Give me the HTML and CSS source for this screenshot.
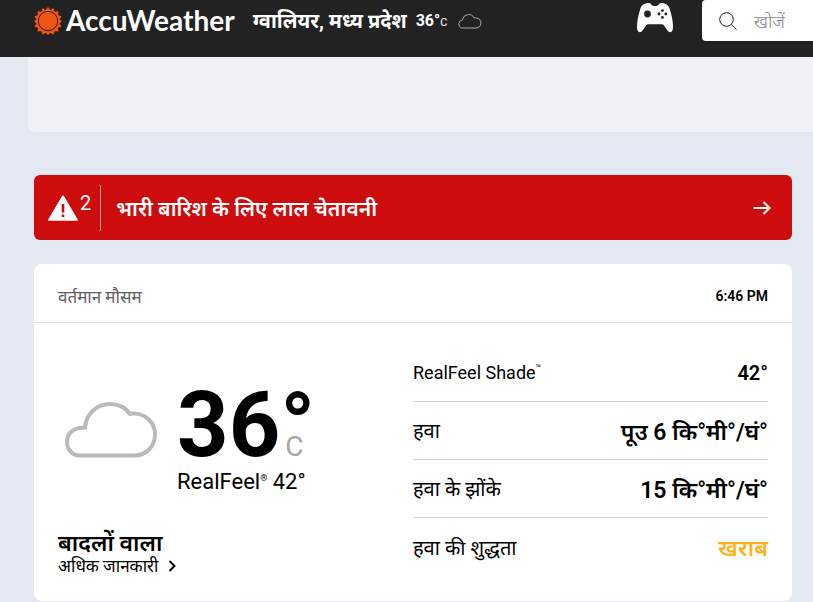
FILE: index.html
```html
<!DOCTYPE html>
<html lang="hi">
<head>
  <meta charset="UTF-8" />
  <title>ग्वालियर, मध्य प्रदेश | AccuWeather</title>
  <meta name="viewport" content="width=device-width, initial-scale=1.0" />
  <link rel="stylesheet" href="styles.css">
</head>
<body>

<header class="header">
  <a class="logo" href="#">
    <svg class="sun" viewBox="0 0 28 28" aria-hidden="true">
      <path fill="#f05514" d="M14 0l2.400 3.100L19.600 1l1 3.700 3.900-.5-.5 3.900 3.500 1.200-2 3.200L28 14l-2.500 2.400 2 3.300-3.600 1.100.6 3.800-3.800-.4-1.100 3.600-3.200-2L14 28l-2.400-2.300-3.200 2-1.100-3.600-3.800.4.6-3.800L.5 19.700l2-3.300L0 14l2.500-1.500-2-3.200L4 8.100l-.5-3.900 3.900.5 1-3.700 3.200 2.100z"/>
      <circle cx="14" cy="14" r="9.700" fill="none" stroke="#2a1a14" stroke-width="1"/>
    </svg>
    <span>AccuWeather</span>
  </a>
  <a class="location" href="#">
    <span class="place">ग्वालियर, मध्य प्रदेश</span>
    <span class="place-temp">36°<small>C</small></span>
    <svg class="mini-cloud" viewBox="0 0 26 16" aria-hidden="true">
      <path d="M5.500 15h14.500a5 5 0 0 0 .8-9.900 5 5 0 0 0-2.600-.1A6.200 6.200 0 0 0 6.500 6.900 4.200 4.200 0 0 0 5.500 15z"/>
    </svg>
  </a>
  <a class="games" href="#" aria-label="Games">
    <svg viewBox="0 0 36 30" aria-hidden="true">
      <path fill="#fff" d="M8 .7c2.500-1 5-.8 6.300.8.8 1 2 1.500 3.700 1.500s2.900-.5 3.700-1.500C23-.1 25.500-.3 28 .7c2.500.9 3.700 2 4.500 4.600C34.500 11.500 36 18 36 24c0 3-1 5.200-2.800 5.200-1.300 0-2.200-.9-3.300-2.500l-2.700-4c-.7-1-1.500-1.500-2.800-1.500H11.600c-1.300 0-2.100.5-2.800 1.500l-2.700 4C5 28.300 4.100 29.200 2.800 29.200 1 29.200 0 27 0 24 0 18 1.500 11.500 3.500 5.300 4.300 2.700 5.500 1.600 8 .7z"/>
      <circle cx="10.500" cy="11" r="3.400" fill="#222"/>
      <circle cx="25.400" cy="7.600" r="1.400" fill="#222"/>
      <circle cx="25.400" cy="14.400" r="1.400" fill="#222"/>
      <circle cx="22" cy="11" r="1.400" fill="#222"/>
      <circle cx="28.800" cy="11" r="1.400" fill="#222"/>
    </svg>
  </a>
  <form class="search">
    <svg viewBox="0 0 18 18" aria-hidden="true">
      <circle cx="7.500" cy="7.500" r="6.800"/>
      <path d="M12.300 12.300L17.500 17.500"/>
    </svg>
    <input type="text" placeholder="खोजें" aria-label="खोजें" />
  </form>
</header>

<div class="top-panel"></div>

<main class="content">
  <a class="alert" href="#">
    <span class="alert-count">
      <svg viewBox="0 0 30 26" aria-hidden="true">
        <path fill="#fff" d="M15 .5c.4 0 .7.2.9.6L29.800 24.500c.3.6 0 1.200-.7 1.200H.9c-.7 0-1-.6-.7-1.200L14.100 1.100c.2-.4.5-.6.9-.6z"/>
        <path stroke="#cd0c0d" stroke-width="2.600" d="M15 9v8.500M15 19.500v2.600"/>
      </svg>
      <span>2</span>
    </span>
    <span class="alert-text">भारी बारिश के लिए लाल चेतावनी</span>
    <svg class="arrow" viewBox="0 0 18 14" aria-hidden="true">
      <path d="M.5 7H16.500M10.500 1l6 6-6 6"/>
    </svg>
  </a>

  <section class="card">
    <div class="card-header">
      <h2>वर्तमान मौसम</h2>
      <p>6:46 PM</p>
    </div>
    <div class="card-body">
      <div class="current">
        <div class="forecast">
          <svg class="cloud" viewBox="0 0 92 56" aria-hidden="true">
            <path d="M15 53.500H69.500C81 53.500 90 44.500 90 32.500S80.500 11.500 68.500 11.500Q66.500 11.500 65 12C60.500 5.500 53.500 2 45 2 31.500 2 21 12 20 25.500 9.500 25.500 2 30.500 2 40 2 47.500 7.500 53.500 15 53.500z"/>
          </svg>
          <div class="temps">
            <div class="temp">36°<span>C</span></div>
            <div class="real-feel">RealFeel<sup>®</sup> 42°</div>
          </div>
        </div>
        <div class="summary">
          <div class="phrase">बादलों वाला</div>
          <a class="more" href="#">अधिक जानकारी
            <svg viewBox="0 0 8 12" aria-hidden="true"><path d="M1.500 1l5 5-5 5"/></svg>
          </a>
        </div>
      </div>
      <dl class="details">
        <div class="detail latin"><dt>RealFeel Shade<sup>™</sup></dt><dd>42°</dd></div>
        <div class="detail"><dt>हवा</dt><dd>पूउ 6 कि°मी°/घं°</dd></div>
        <div class="detail"><dt>हवा के झोंके</dt><dd>15 कि°मी°/घं°</dd></div>
        <div class="detail"><dt>हवा की शुद्धता</dt><dd class="poor">खराब</dd></div>
      </dl>
    </div>
  </section>
</main>

</body>
</html>
```
FILE: styles.css
```css
* { box-sizing: border-box; }
body {
  margin: 0;
  font-family: Roboto, "Noto Sans", sans-serif;
  background: #e4e9f1;
  color: #000;
}
a { color: inherit; text-decoration: none; }
h2, p, dl, dd { margin: 0; }
svg { display: block; flex: none; }
sup { font-size: 9px; line-height: 0; vertical-align: 8px; }

.header {
  display: flex;
  align-items: flex-start;
  height: 57px;
  padding-left: 34px;
  background: #222;
  color: #fff;
}
.logo {
  display: flex;
  align-items: center;
  gap: 4px;
  height: 41px;
  font: 700 28px/41px Lato, sans-serif;
}
.sun { width: 28px; height: 28px; }
.location {
  display: flex;
  align-items: center;
  gap: 9px;
  height: 41px;
  margin-left: 18px;
  font-weight: 700;
  font-size: 20px;
}
.place-temp { font-size: 16px; font-weight: 700; }
.place-temp small { font-size: 11px; font-weight: 400; }
.mini-cloud {
  width: 26px;
  height: 16px;
  fill: none;
  stroke: #aaa;
}
.games { margin: 3px 29px 0 auto; }
.games svg { width: 36px; height: 30px; }
.search {
  display: flex;
  align-items: center;
  gap: 17px;
  width: 111px;
  height: 41px;
  padding-left: 17px;
  background: #fff;
  border-radius: 4px 0 0 4px;
}
.search svg {
  width: 18px;
  height: 18px;
  fill: none;
  stroke: #222;
}
.search input {
  flex: 1;
  min-width: 0;
  padding: 0;
  border: none;
  outline: none;
  background: none;
  font: 300 18px "Noto Sans", sans-serif;
}
.search input::placeholder { color: #878787; }

.top-panel {
  height: 75px;
  margin-left: 28px;
  background: #f0f2f7;
  border-radius: 0 0 0 6px;
}
.content { padding: 43px 21px 0 34px; }

.alert {
  display: flex;
  align-items: center;
  height: 65px;
  padding: 0 21px 0 14px;
  background: #cd0c0d;
  border-radius: 6px;
  color: #fff;
}
.alert-count {
  display: flex;
  align-items: center;
  gap: 2px;
  height: 46px;
  padding-right: 9px;
  border-right: 1px solid #eb9c9c;
}
.alert-count svg { width: 30px; height: 26px; }
.alert-count span { padding-bottom: 10px; font-size: 20px; }
.alert-text {
  flex: 1;
  padding-left: 15px;
  font-size: 21px;
  font-weight: 600;
}
.arrow {
  width: 18px;
  height: 14px;
  fill: none;
  stroke: #fff;
  stroke-width: 2;
}

.card {
  margin-top: 24px;
  background: #fff;
  border-radius: 8px;
}
.card-header {
  display: flex;
  align-items: center;
  justify-content: space-between;
  height: 59px;
  padding: 6px 24px 0;
  border-bottom: 1px solid #dfe2e6;
}
.card-header h2 { font-size: 17px; font-weight: 400; color: #606060; }
.card-header p { font-size: 14px; font-weight: 600; }
.card-body {
  display: grid;
  grid-template-columns: 1fr 1fr;
  padding: 21px 24px 25px;
}
.current { padding-top: 36px; }
.forecast { display: flex; gap: 20px; padding-left: 7px; }
.cloud {
  width: 92px;
  height: 56px;
  margin-top: 22px;
  fill: none;
  stroke: #bababa;
  stroke-width: 4;
}
.temp { font-size: 90px; font-weight: 700; line-height: 92px; }
.temp span {
  margin-left: -30px;
  font-size: 28px;
  font-weight: 400;
  line-height: 28px;
  color: #a5a5a5;
}
.real-feel { font-size: 22px; line-height: 20px; }
.summary { padding-top: 38px; }
.phrase { font-size: 23px; font-weight: 600; line-height: 28px; }
.more {
  display: flex;
  align-items: center;
  gap: 10px;
  font-size: 17px;
  line-height: 16px;
}
.more svg {
  width: 8px;
  height: 12px;
  fill: none;
  stroke: #000;
  stroke-width: 2;
}

.detail {
  display: flex;
  align-items: center;
  justify-content: space-between;
  height: 58px;
  border-bottom: 1px solid #d4d2da;
}
.detail:last-child { border-bottom: none; }
.detail dt { font-size: 20px; }
.detail dd { font-size: 23px; font-weight: 600; }
.latin dt { font-size: 18px; }
.latin dd { font-size: 20px; }
.detail .poor { color: #fcb322; }
```
